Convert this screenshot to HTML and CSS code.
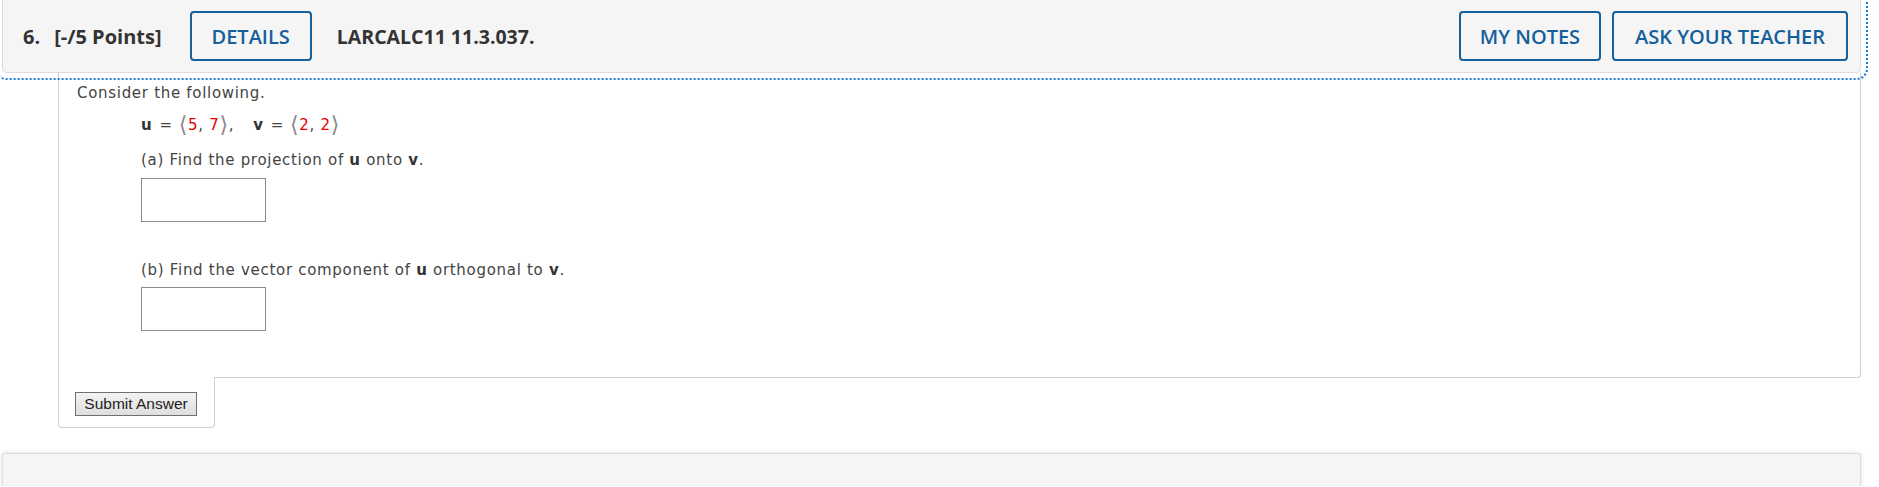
FILE: index.html
```html
<!DOCTYPE html>
<html lang="en">
<head>
<meta charset="utf-8">
<title>LARCALC11 11.3.037</title>
<link rel="stylesheet" href="styles.css">
</head>
<body>
<div class="page">
  <div class="q-header" tabindex="0">
    <span class="q-num">6.</span>
    <span class="q-points">[-/5 Points]</span>
    <button class="hbtn details">DETAILS</button>
    <span class="q-code">LARCALC11 11.3.037.</span>
    <div class="hbtn-group">
      <button class="hbtn">MY NOTES</button>
      <button class="hbtn">ASK YOUR TEACHER</button>
    </div>
  </div>

  <div class="q-body">
    <p class="line">Consider the following.</p>
    <div class="indent">
      <p class="line eq"><b class="vec">u</b><span class="eqs">=</span><span class="br">⟨</span><span class="num">5</span>, <span class="num">7</span><span class="br">⟩</span>,<span class="eq-gap"></span><b class="vec">v</b><span class="eqs">=</span><span class="br">⟨</span><span class="num">2</span>, <span class="num">2</span><span class="br">⟩</span></p>
      <p class="line part-a">(a) Find the projection of <b class="vec">u</b> onto <b class="vec">v</b>.</p>
      <div class="answer a1"></div>
      <p class="line part-b">(b) Find the vector component of <b class="vec">u</b> orthogonal to <b class="vec">v</b>.</p>
      <div class="answer a2"></div>
    </div>
  </div>
  <div class="submit-tab">
    <button class="submit">Submit Answer</button>
  </div>

  <div class="next-card"></div>
</div>
</body>
</html>
```

FILE: styles.css
```css
html, body {
  margin: 0;
  padding: 0;
  background: #ffffff;
}

.page {
  margin: 0 18px 0 2px;
}

/* ---------- header ---------- */
.q-header {
  display: flex;
  align-items: center;
  margin-top: -1px;
  padding: 11px 12px 11px 20px;
  background: #f5f5f5;
  border: 1px solid #dcdcdc;
  border-radius: 0 0 4px 4px;
  outline: 2px dotted #1f80d8;
  outline-offset: 5px;
  font-family: "Open Sans", "Liberation Sans", sans-serif;
  color: #333333;
}

.q-num {
  font-size: 20px;
  font-weight: 700;
}

.q-points {
  margin-left: 14px;
  font-size: 20px;
  font-weight: 700;
}

.q-code {
  margin-left: 25px;
  font-size: 19.5px;
  font-weight: 700;
}

.hbtn {
  height: 50px;
  padding: 0 21px;
  background: transparent;
  border: 2px solid #16609c;
  border-radius: 4px;
  color: #14609c;
  font-family: "Open Sans", "Liberation Sans", sans-serif;
  font-size: 20px;
  font-weight: 600;
  cursor: pointer;
}

.details {
  margin-left: 28px;
  padding: 0 20px;
}

.hbtn-group {
  display: flex;
  gap: 11px;
  margin-left: auto;
}

.hbtn-group .hbtn:first-child {
  padding: 0 19px;
}

/* ---------- body ---------- */
.q-body {
  margin-left: 56px;
  padding: 11px 18px 46px 18px;
  border: 1px solid #cfcfcf;
  border-top: none;
  border-radius: 0 0 4px 0;
  font-family: "DejaVu Sans", Verdana, sans-serif;
  font-size: 15px;
  letter-spacing: 0.7px;
  color: #444444;
}

.line {
  margin: 0;
  line-height: 18px;
  white-space: nowrap;
}

.indent {
  padding-left: 64px;
}

.eq {
  margin-top: 14px;
}

.eqs {
  margin: 0 6px 0 7px;
}

.vec {
  font-weight: 600;
  color: #333333;
}

.num {
  color: #e00000;
}

.br {
  font-size: 22px;
  line-height: 0;
  color: #8a8a8a;
  vertical-align: -2px;
}

.eq-gap {
  display: inline-block;
  width: 19px;
}

.part-a {
  margin-top: 17px;
}

.answer {
  width: 125px;
  height: 44px;
  box-sizing: border-box;
  border: 1px solid #8c8c8c;
  background: #ffffff;
}

.a1 {
  margin-top: 9px;
}

.part-b {
  margin-top: 39px;
}

.a2 {
  margin-top: 8px;
}

/* ---------- submit tab ---------- */
.submit-tab {
  width: 157px;
  box-sizing: border-box;
  margin-left: 56px;
  margin-top: -1px;
  padding: 15px 0 11px 16px;
  background: #ffffff;
  border: 1px solid #cfcfcf;
  border-top: none;
  border-radius: 0 0 4px 4px;
}

.submit {
  display: block;
  height: 24px;
  width: 122px;
  padding: 0;
  background: linear-gradient(#f3f3f3, #dedede);
  border: 1px solid #707070;
  border-radius: 0;
  font-family: "Liberation Sans", Arial, sans-serif;
  font-size: 15.5px;
  color: #222222;
}

/* ---------- next card ---------- */
.next-card {
  margin-top: 25px;
  height: 32px;
  background: #f5f5f5;
  border: 1px solid #dddddd;
  border-bottom: none;
  border-radius: 3px 3px 0 0;
  box-shadow: 0 0 4px rgba(0, 0, 0, 0.15);
}
```
